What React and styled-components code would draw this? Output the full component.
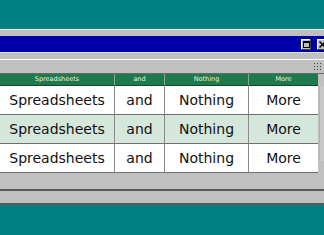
import React from "react";
import styled, { createGlobalStyle } from "styled-components";

const Global = createGlobalStyle`
  html, body { margin: 0; padding: 0; background: #008080; overflow: hidden; }
  body { width: 324px; height: 235px; font-family: "DejaVu Sans", Verdana, sans-serif; }
`;

const Desktop = styled.div`
  width: 324px;
  height: 235px;
  background: #008080;
  padding-top: 29px;
  box-sizing: border-box;
`;

const Window = styled.div`
  background: #c0c0c0;
  border-top: 1px solid #e8e8e8;
  padding-top: 6px;
`;

const TitleBar = styled.div`
  height: 16px;
  background: #0000a8;
  display: flex;
  align-items: center;
  justify-content: flex-end;
  gap: 6px;
  padding-right: 0;
  overflow: hidden;
`;

const TitleButton = styled.div`
  width: 10px;
  height: 11px;
  flex: none;
  background: #c0c0c0;
  box-shadow: inset -1px -1px #404040, inset 1px 1px #ffffff;
  display: flex;
  align-items: center;
  justify-content: center;
  margin-right: ${(p) => (p.$last ? "-3px" : "0")};
`;

const Spacer = styled.div`
  height: 7px;
  border-top: 1px solid #dcdcdc;
  box-sizing: border-box;
`;

const Toolbar = styled.div`
  height: 15px;
  border-top: 1px solid #ffffff;
  border-bottom: 1px solid #6a6a6a;
  box-sizing: border-box;
  display: flex;
  justify-content: flex-end;
  align-items: center;
  padding-right: 2px;
`;

const Grip = styled.div`
  width: 9px;
  height: 9px;
  background-image: radial-gradient(circle, #404040 0.8px, transparent 1px);
  background-size: 3px 3px;
`;

const TableArea = styled.div`
  display: flex;
  background: #c0c0c0;
`;

const Grid = styled.div`
  display: grid;
  grid-template-columns: 115px 50px 84px 69px;
  width: 318px;
  border-right: 1px solid #707070;
  box-sizing: border-box;
  background: #ffffff;
`;

const HeadCell = styled.div`
  height: 12px;
  background: #1e7a4c;
  color: #e6f3ea;
  font-size: 6.5px;
  line-height: 11px;
  text-align: center;
  border-right: ${(p) => (p.$last ? "none" : "1px solid #8aa896")};
  border-bottom: 1px solid #0f4a2c;
  box-sizing: border-box;
  overflow: hidden;
  white-space: nowrap;
`;

const Cell = styled.div`
  height: 29px;
  background: ${(p) => (p.$alt ? "#d4e7da" : "#ffffff")};
  color: #111111;
  font-size: 14px;
  line-height: 28px;
  text-align: center;
  border-right: ${(p) => (p.$last ? "none" : "1px solid #8a8a8a")};
  border-bottom: 1px solid #6f6f6f;
  box-sizing: border-box;
  white-space: nowrap;
`;

const SideStrip = styled.div`
  flex: 1;
  border-left: 1px solid #b0b0b0;
  margin-left: 1px;
  margin-top: 12px;
  margin-bottom: 12px;
  background: #c8c8c8;
`;

const StatusA = styled.div`
  height: 18px;
  border-bottom: 2px solid #5a5a5a;
  box-sizing: border-box;
`;

const StatusB = styled.div`
  height: 14px;
  border-bottom: 2px solid #5a5a5a;
  box-sizing: border-box;
`;

const MaxIcon = () => (
  <svg width="7" height="7" viewBox="0 0 7 7">
    <rect x="0.5" y="0.5" width="6" height="6" fill="none" stroke="#000" strokeWidth="1" />
    <rect x="0" y="0" width="7" height="2" fill="#000" />
  </svg>
);

const CloseIcon = () => (
  <svg width="7" height="7" viewBox="0 0 7 7">
    <path d="M0.5 0.5 L6.5 6.5 M6.5 0.5 L0.5 6.5" stroke="#000" strokeWidth="1.4" />
  </svg>
);

const cols = ["Spreadsheets", "and", "Nothing", "More"];

export default function App() {
  return (
    <>
      <Global />
      <Desktop>
        <Window>
          <TitleBar>
            <TitleButton>
              <MaxIcon />
            </TitleButton>
            <TitleButton $last>
              <CloseIcon />
            </TitleButton>
          </TitleBar>
          <Spacer />
          <Toolbar>
            <Grip />
          </Toolbar>
          <TableArea>
            <Grid>
              {cols.map((c, i) => (
                <HeadCell key={c} $last={i === cols.length - 1}>
                  {c}
                </HeadCell>
              ))}
              {[0, 1, 2].map((r) =>
                cols.map((c, i) => (
                  <Cell key={r + c} $alt={r === 1} $last={i === cols.length - 1}>
                    {c}
                  </Cell>
                ))
              )}
            </Grid>
            <SideStrip />
          </TableArea>
          <StatusA />
          <StatusB />
        </Window>
      </Desktop>
    </>
  );
}
